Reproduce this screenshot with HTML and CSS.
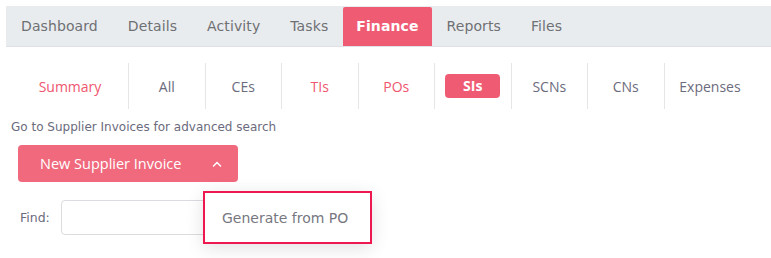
FILE: index.html
```html
<!DOCTYPE html>
<html lang="en">
<head>
    <meta charset="UTF-8">
    <title>Finance</title>
    <link rel="stylesheet" href="styles.css">
</head>
<body>
    <ul class="main-tabs">
        <li>Dashboard</li>
        <li>Details</li>
        <li>Activity</li>
        <li>Tasks</li>
        <li class="active">Finance</li>
        <li>Reports</li>
        <li>Files</li>
    </ul>

    <ul class="sub-tabs">
        <li class="red first">Summary</li>
        <li>All</li>
        <li>CEs</li>
        <li class="red">TIs</li>
        <li class="red">POs</li>
        <li><span class="pill">SIs</span></li>
        <li>SCNs</li>
        <li>CNs</li>
        <li class="last">Expenses</li>
    </ul>

    <div class="hint">Go to Supplier Invoices for advanced search</div>

    <div class="actions">
        <button class="new-btn">
            New Supplier Invoice
            <svg class="chevron" width="10" height="6" viewBox="0 0 10 6">
                <path d="M1.5 5 L5 1.5 L8.5 5" fill="none" stroke="white" stroke-width="1.5" stroke-linecap="round"/>
            </svg>
        </button>
    </div>

    <div class="find-row">
        <label for="find">Find:</label>
        <input type="text" id="find">
        <div class="dropdown">Generate from PO</div>
    </div>
</body>
</html>
```

FILE: styles.css
```css
html {
    min-height: 258px;
}

body {
    font-family: "Open Sans", sans-serif;
    background: #fff;
    margin: 0;
    padding: 6px 0 30px 6px;
}

.main-tabs {
    list-style: none;
    margin: 0;
    padding: 1px 0 0 0;
    display: flex;
    background: #e9ecef;
    border-bottom: 1px solid #dee2e6;
    height: 39px;
}

    .main-tabs li {
        font-family: "DejaVu Sans", sans-serif;
        font-size: 14px;
        letter-spacing: 0.1px;
        color: #6f7073;
        padding: 0 15px;
        line-height: 39px;
    }

    .main-tabs li.active {
        background: #f05b74;
        color: white;
        font-weight: bold;
        padding: 0 13px;
        border-radius: 2px 2px 0 0;
    }

.sub-tabs {
    list-style: none;
    margin: 16px 0 0 0;
    padding: 0;
    display: flex;
}

    .sub-tabs li {
        box-sizing: border-box;
        width: 76.5px;
        flex: none;
        height: 46px;
        border-left: 1px solid #e6e6e9;
        display: flex;
        align-items: center;
        justify-content: center;
        font-size: 14px;
        color: #6b6b7d;
    }

    .sub-tabs li.first {
        width: 122px;
        border-left: none;
        padding-left: 6px;
    }

    .sub-tabs li.last {
        width: 92px;
    }

    .sub-tabs li.red {
        color: #f0566f;
    }

.pill {
    background: #f05b74;
    color: white;
    font-weight: bold;
    padding: 0 18px;
    line-height: 24px;
    border-radius: 4px;
}

.hint {
    font-family: "DejaVu Sans", sans-serif;
    font-size: 12px;
    color: #6b6b7d;
    margin: 11px 0 0 5px;
}

.actions {
    margin: 11px 0 0 12px;
}

.new-btn {
    font-family: "Open Sans", sans-serif;
    font-size: 14.5px;
    width: 220px;
    height: 37px;
    border: none;
    border-radius: 4px;
    background: #f0697d;
    color: white;
    display: flex;
    align-items: center;
    padding: 0 16px 0 22px;
    justify-content: space-between;
}

.find-row {
    position: relative;
    display: flex;
    align-items: center;
    margin: 18px 0 0 14px;
}

    .find-row label {
        font-family: "DejaVu Sans", sans-serif;
        font-size: 12.5px;
        color: #6b6b7d;
        margin-right: 11px;
    }

    .find-row input {
        width: 170px;
        height: 33px;
        border: 1px solid #dcdce0;
        border-radius: 4px;
        padding: 0;
    }

.dropdown {
    position: absolute;
    left: 183px;
    top: -9px;
    width: 148px;
    height: 49px;
    border: 2px solid #ef1750;
    background: white;
    box-shadow: 0 4px 18px rgba(0, 0, 0, 0.12);
    font-family: "DejaVu Sans", sans-serif;
    font-size: 14px;
    color: #77777f;
    display: flex;
    align-items: center;
    padding-left: 17px;
    box-sizing: content-box;
}
```
